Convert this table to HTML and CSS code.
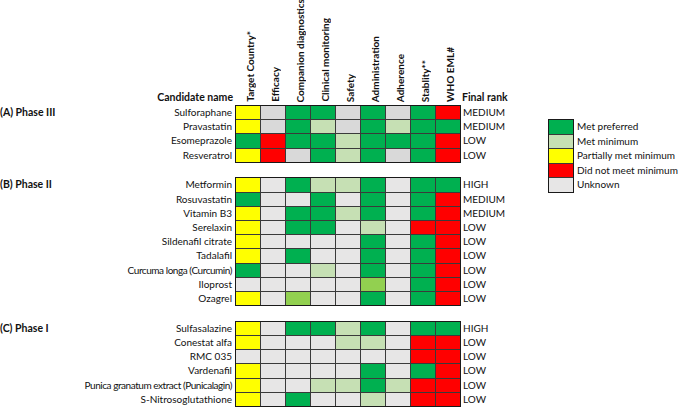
FILE: index.html
```html
<!DOCTYPE html>
<html>
<head>
<meta charset="utf-8">
<link rel="stylesheet" href="styles.css">
</head>
<body>
<div class="page">
  <div class="chart">
    <div class="head">
      <div class="head-name">Candidate name</div>
      <div class="head-cols">
        <div class="hc"><span>Target Country*</span></div>
        <div class="hc"><span>Efficacy</span></div>
        <div class="hc"><span>Companion diagnostics</span></div>
        <div class="hc"><span>Clinical monitoring</span></div>
        <div class="hc"><span>Safety</span></div>
        <div class="hc"><span>Administration</span></div>
        <div class="hc"><span>Adherence</span></div>
        <div class="hc"><span>Stablity**</span></div>
        <div class="hc"><span>WHO EML#</span></div>
      </div>
      <div class="head-rank">Final rank</div>
    </div>

    <div class="section">
      <div class="sec-label">(A) Phase III</div>
      <div class="names">
        <div>Sulforaphane</div><div>Pravastatin</div><div>Esomeprazole</div><div>Resveratrol</div>
      </div>
      <div class="cells dark">
        <i class="y"></i><i class="u"></i><i class="g"></i><i class="g"></i><i class="u"></i><i class="g"></i><i class="u"></i><i class="g"></i><i class="r"></i>
        <i class="y"></i><i class="u"></i><i class="g"></i><i class="l"></i><i class="u"></i><i class="g"></i><i class="l"></i><i class="g"></i><i class="g"></i>
        <i class="g"></i><i class="r"></i><i class="g"></i><i class="g"></i><i class="l"></i><i class="g"></i><i class="g"></i><i class="g"></i><i class="r"></i>
        <i class="y"></i><i class="r"></i><i class="u"></i><i class="g"></i><i class="l"></i><i class="g"></i><i class="u"></i><i class="g"></i><i class="r"></i>
      </div>
      <div class="ranks">
        <div>MEDIUM</div><div>MEDIUM</div><div>LOW</div><div>LOW</div>
      </div>
    </div>

    <div class="section">
      <div class="sec-label">(B) Phase II</div>
      <div class="names">
        <div>Metformin</div><div>Rosuvastatin</div><div>Vitamin B3</div><div>Serelaxin</div><div>Sildenafil citrate</div><div>Tadalafil</div><div class="tight">Curcuma longa (Curcumin)</div><div>Iloprost</div><div>Ozagrel</div>
      </div>
      <div class="cells">
        <i class="y"></i><i class="u"></i><i class="g"></i><i class="l"></i><i class="l"></i><i class="g"></i><i class="u"></i><i class="g"></i><i class="g"></i>
        <i class="g"></i><i class="u"></i><i class="u"></i><i class="g"></i><i class="u"></i><i class="g"></i><i class="u"></i><i class="g"></i><i class="r"></i>
        <i class="y"></i><i class="u"></i><i class="g"></i><i class="g"></i><i class="l"></i><i class="g"></i><i class="u"></i><i class="g"></i><i class="r"></i>
        <i class="y"></i><i class="u"></i><i class="g"></i><i class="g"></i><i class="u"></i><i class="l"></i><i class="u"></i><i class="r"></i><i class="r"></i>
        <i class="y"></i><i class="u"></i><i class="u"></i><i class="u"></i><i class="u"></i><i class="g"></i><i class="u"></i><i class="g"></i><i class="r"></i>
        <i class="y"></i><i class="u"></i><i class="g"></i><i class="u"></i><i class="u"></i><i class="g"></i><i class="u"></i><i class="g"></i><i class="r"></i>
        <i class="g"></i><i class="u"></i><i class="u"></i><i class="l"></i><i class="u"></i><i class="g"></i><i class="u"></i><i class="g"></i><i class="r"></i>
        <i class="u"></i><i class="u"></i><i class="u"></i><i class="u"></i><i class="u"></i><i class="m"></i><i class="u"></i><i class="g"></i><i class="r"></i>
        <i class="y"></i><i class="u"></i><i class="m"></i><i class="u"></i><i class="u"></i><i class="g"></i><i class="u"></i><i class="g"></i><i class="r"></i>
      </div>
      <div class="ranks">
        <div>HIGH</div><div>MEDIUM</div><div>MEDIUM</div><div>LOW</div><div>LOW</div><div>LOW</div><div>LOW</div><div>LOW</div><div>LOW</div>
      </div>
    </div>

    <div class="section">
      <div class="sec-label">(C) Phase I</div>
      <div class="names">
        <div>Sulfasalazine</div><div>Conestat alfa</div><div>RMC 035</div><div>Vardenafil</div><div class="tight">Punica granatum extract (Punicalagin)</div><div>S-Nitrosoglutathione</div>
      </div>
      <div class="cells">
        <i class="y"></i><i class="u"></i><i class="g"></i><i class="g"></i><i class="l"></i><i class="g"></i><i class="u"></i><i class="g"></i><i class="g"></i>
        <i class="y"></i><i class="u"></i><i class="u"></i><i class="u"></i><i class="l"></i><i class="l"></i><i class="u"></i><i class="r"></i><i class="r"></i>
        <i class="u"></i><i class="u"></i><i class="u"></i><i class="u"></i><i class="u"></i><i class="u"></i><i class="u"></i><i class="r"></i><i class="r"></i>
        <i class="y"></i><i class="u"></i><i class="u"></i><i class="u"></i><i class="u"></i><i class="g"></i><i class="u"></i><i class="g"></i><i class="r"></i>
        <i class="y"></i><i class="u"></i><i class="u"></i><i class="l"></i><i class="l"></i><i class="g"></i><i class="l"></i><i class="r"></i><i class="r"></i>
        <i class="y"></i><i class="u"></i><i class="g"></i><i class="u"></i><i class="u"></i><i class="l"></i><i class="u"></i><i class="r"></i><i class="r"></i>
      </div>
      <div class="ranks">
        <div>HIGH</div><div>LOW</div><div>LOW</div><div>LOW</div><div>LOW</div><div>LOW</div>
      </div>
    </div>
  </div>

  <div class="legend">
    <div class="legend-boxes">
      <i class="g"></i><i class="l"></i><i class="y"></i><i class="r"></i><i class="u"></i>
    </div>
    <div class="legend-text">
      <div>Met preferred</div><div>Met minimum</div><div>Partially met minimum</div><div>Did not meet minimum</div><div>Unknown</div>
    </div>
  </div>
</div>
</body>
</html>
```

FILE: styles.css
```css
* { box-sizing: border-box; }
html, body { margin: 0; padding: 0; background: #fff; }
body {
  font-family: "Lato", "Liberation Sans", sans-serif;
  font-size: 10px;
  color: #111;
  width: 685px;
  height: 408px;
  overflow: hidden;
}
.page { display: flex; }
.chart { display: flex; flex-direction: column; width: 520px; }

.head { display: flex; height: 105px; align-items: flex-end; }
.head-name {
  width: 235px;
  text-align: right;
  padding-right: 2px;
  font-weight: bold;
  font-size: 10.5px;
  line-height: 13px;
  padding-bottom: 1px;
}
.head-cols { display: flex; height: 105px; }
.hc {
  width: 25px;
  display: flex;
  align-items: flex-end;
  justify-content: center;
  padding-bottom: 3px;
  padding-left: 4px;
}
.hc span {
  writing-mode: vertical-rl;
  transform: rotate(180deg);
  white-space: nowrap;
  font-weight: bold;
  font-size: 10px;
  line-height: 12px;
}
.head-rank {
  padding-left: 2px;
  font-weight: bold;
  font-size: 10.5px;
  line-height: 13px;
  padding-bottom: 1px;
}

.section { display: flex; margin-bottom: 14.7px; }
.sec-label {
  width: 70px;
  font-weight: bold;
  font-size: 10.5px;
  padding-top: 1px;
  line-height: 13.2px;
  white-space: nowrap;
}
.names, .ranks {
  display: flex;
  flex-direction: column;
  gap: 1px;
  padding-top: 1px;
}
.names { width: 165px; text-align: right; padding-right: 3px; }
.names div, .ranks div { height: 13.2px; line-height: 13.2px; white-space: nowrap; }
.names .tight { letter-spacing: -0.45px; }
.ranks { padding-left: 2px; }

.cells {
  display: grid;
  grid-template-columns: repeat(9, 24px);
  grid-auto-rows: 13.2px;
  gap: 1px;
  background: #3a3a3a;
  border: 1px solid #1a1a1a;
  align-self: flex-start;
}
.cells i, .legend-boxes i { display: block; }

.g { background: #00b050; }
.l { background: #c6e0b4; }
.m { background: #92d050; }
.y { background: #ffff00; }
.r { background: #ff0000; }
.u { background: #e7e6e6; }
.cells.dark .u { background: #d9d9d9; }

.legend { display: flex; margin-top: 119px; margin-left: 28px; align-self: flex-start; }
.legend-boxes {
  display: grid;
  grid-template-columns: 24px;
  grid-auto-rows: 13.5px;
  gap: 1px;
  background: #3a3a3a;
  border: 1px solid #1a1a1a;
}
.legend-text { display: flex; flex-direction: column; gap: 1px; padding-top: 1px; padding-left: 3px; }
.legend-text div { height: 13.5px; line-height: 13.5px; white-space: nowrap; }
```
